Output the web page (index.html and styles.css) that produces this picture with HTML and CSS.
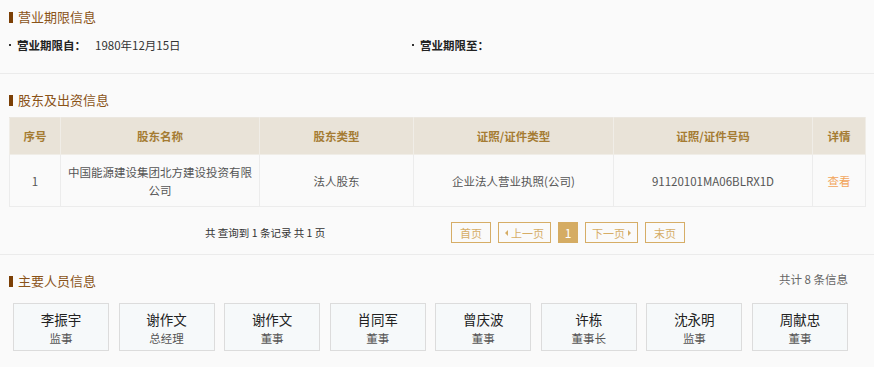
FILE: index.html
```html
<!DOCTYPE html>
<html lang="zh">
<head>
<meta charset="utf-8">
<link rel="stylesheet" href="styles.css">
</head>
<body>
<section class="sec sec-period">
  <h2 class="title">营业期限信息</h2>
  <div class="period-row">
    <div class="period-item"><span class="dot"></span><span class="lbl">营业期限自：</span><span class="val">1980年12月15日</span></div>
    <div class="period-item"><span class="dot"></span><span class="lbl">营业期限至：</span><span class="val"></span></div>
  </div>
</section>
<section class="sec sec-holders">
  <h2 class="title">股东及出资信息</h2>
  <table class="tbl">
    <colgroup>
      <col class="c1"><col class="c2"><col class="c3"><col class="c4"><col class="c5"><col class="c6">
    </colgroup>
    <thead>
      <tr><th>序号</th><th>股东名称</th><th>股东类型</th><th>证照/证件类型</th><th>证照/证件号码</th><th>详情</th></tr>
    </thead>
    <tbody>
      <tr>
        <td>1</td>
        <td class="name">中国能源建设集团北方建设投资有限公司</td>
        <td>法人股东</td>
        <td>企业法人营业执照(公司)</td>
        <td>91120101MA06BLRX1D</td>
        <td><a class="link">查看</a></td>
      </tr>
    </tbody>
  </table>
  <div class="pager">
    <span class="pager-info">共 查询到 1 条记录 共 1 页</span>
    <div class="pager-btns">
      <span class="pbtn w40">首页</span>
      <span class="pbtn w52"><i class="tri tri-l"></i>上一页</span>
      <span class="pbtn cur">1</span>
      <span class="pbtn w52">下一页<i class="tri tri-r"></i></span>
      <span class="pbtn w40">末页</span>
    </div>
  </div>
</section>
<section class="sec sec-people">
  <div class="people-head">
    <h2 class="title">主要人员信息</h2>
    <span class="count">共计 8 条信息</span>
  </div>
  <div class="cards">
    <div class="card"><div class="pname">李振宇</div><div class="role">监事</div></div>
    <div class="card"><div class="pname">谢作文</div><div class="role">总经理</div></div>
    <div class="card"><div class="pname">谢作文</div><div class="role">董事</div></div>
    <div class="card"><div class="pname">肖同军</div><div class="role">董事</div></div>
    <div class="card"><div class="pname">曾庆波</div><div class="role">董事</div></div>
    <div class="card"><div class="pname">许栋</div><div class="role">董事长</div></div>
    <div class="card"><div class="pname">沈永明</div><div class="role">监事</div></div>
    <div class="card"><div class="pname">周献忠</div><div class="role">董事</div></div>
  </div>
</section>
</body>
</html>
```
FILE: styles.css
```css
* { box-sizing: border-box; }
html, body { margin: 0; padding: 0; }
body {
  background: #fafafa;
  font-family: "Noto Sans CJK SC", "Noto Sans", sans-serif;
  font-size: 12px;
  color: #333;
  width: 874px;
  height: 367px;
  overflow: hidden;
}
.sec { border-bottom: 1px solid #ebebeb; }
.sec-period { height: 74px; padding: 7px 0 0 9px; }
.sec-holders { height: 181px; padding: 16px 0 0 9px; }
.sec-people { border-bottom: none; padding: 16px 0 0 0; }

.title {
  margin: 0;
  height: 20px;
  line-height: 20px;
  font-size: 13px;
  font-weight: normal;
  color: #8a5318;
  display: flex;
  align-items: center;
  gap: 5px;
}
.title::before {
  content: "";
  width: 4px;
  height: 11px;
  background: #7b3f05;
  display: block;
}

.period-row { display: flex; margin-top: 8px; height: 20px; line-height: 20px; font-size: 11.5px; }
.period-item { width: 403px; display: flex; align-items: center; }
.dot { width: 2px; height: 2px; background: #333; margin-right: 6px; }
.lbl { font-weight: bold; color: #222; width: 78px; }
.val { color: #333; }

.tbl {
  margin-top: 7px;
  border-collapse: collapse;
  table-layout: fixed;
  width: 856px;
  text-align: center;
  font-size: 11.5px;
}
.c1 { width: 51px; } .c2 { width: 199px; } .c3 { width: 154px; }
.c4 { width: 200px; } .c5 { width: 199px; } .c6 { width: 53px; }
.tbl th {
  background: #e9e3d8;
  color: #a57c33;
  font-weight: bold;
  height: 37px;
  border: 1px solid #f0ede7;
  border-top-color: #ebe7e0;
}
.tbl td {
  height: 52px;
  border: 1px solid #ececec;
  color: #555;
  line-height: 18px;
  padding: 0 5px;
}
.link { color: #f2a55a; }

.pager {
  display: flex;
  align-items: center;
  margin-top: 15px;
  height: 21px;
}
.pager-info { margin-left: 196px; width: 246px; color: #333; font-size: 10.5px; }
.pager-btns { display: flex; gap: 7px; }
.pbtn {
  height: 21px;
  border: 1px solid #d6ad66;
  color: #d6ad66;
  display: flex;
  align-items: center;
  justify-content: center;
  font-size: 11px;
  gap: 3px;
}
.w40 { width: 40px; }
.w52 { width: 53px; }
.cur { width: 20px; background: #d5ac63; color: #fff; border-color: #d5ac63; font-size: 12px; }
.tri { width: 0; height: 0; border-top: 3px solid transparent; border-bottom: 3px solid transparent; display: block; }
.tri-l { border-right: 3px solid #d6ad66; }
.tri-r { border-left: 3px solid #d6ad66; }

.people-head { display: flex; justify-content: space-between; align-items: center; padding: 0 26px 0 9px; }
.count { color: #666; font-size: 11.5px; margin-top: -4px; }
.cards {
  display: grid;
  grid-template-columns: repeat(8, 96px);
  justify-content: space-between;
  width: 835px;
  margin: 12px 0 0 13px;
}
.card {
  height: 48px;
  background: #f6f9fa;
  border: 1px solid #dcdcdc;
  text-align: center;
  padding-top: 6px;
}
.pname { font-size: 13.5px; color: #222; line-height: 19px; }
.role { font-size: 11.5px; color: #555; line-height: 16px; margin-top: 1px; }
```
